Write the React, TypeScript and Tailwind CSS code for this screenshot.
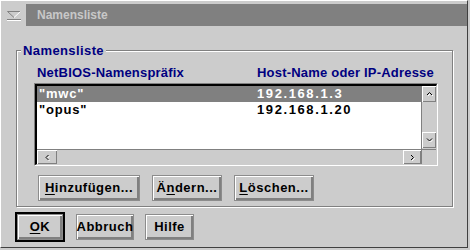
import type { ReactNode } from 'react'

const raised = 'bg-[#cccccc] shadow-[inset_1px_1px_0_#ffffff,inset_-1px_-1px_0_#808080]'

function Arrow({ dir }: { dir: 'up' | 'down' | 'left' | 'right' }) {
  const pts = {
    up: '1,4 3.5,1.5 6,4',
    down: '1,1.5 3.5,4 6,1.5',
    left: '4.5,1 2,3.5 4.5,6',
    right: '2,1 4.5,3.5 2,6',
  }[dir]
  const vertical = dir === 'up' || dir === 'down'
  return (
    <svg width={vertical ? 7 : 6} height={vertical ? 6 : 7} viewBox={vertical ? '0 0 7 6' : '0 0 6 7'}>
      <polyline points={pts} fill="none" stroke="#ffffff" strokeWidth="1" transform="translate(1,1)" />
      <polyline points={pts} fill="none" stroke="#000000" strokeWidth="1" />
    </svg>
  )
}

function Btn({ children, className }: { children: ReactNode; className: string }) {
  return (
    <button
      className={`flex h-[26px] items-center justify-center border border-[#8c8c8c] bg-[#cccccc] text-[13px] font-bold tracking-[0.5px] whitespace-nowrap text-black shadow-[inset_1px_1px_0_#ffffff,inset_-2px_-2px_0_#808080] ${className}`}
    >
      {children}
    </button>
  )
}

function U({ children }: { children: ReactNode }) {
  return <span className="underline decoration-1 underline-offset-2">{children}</span>
}

const rows = [
  { name: '"mwc"', host: '192.168.1.3', selected: true },
  { name: '"opus"', host: '192.168.1.20', selected: false },
]

export default function App() {
  return (
    <div className="h-[250px] w-[470px] bg-[#cccccc] [font-family:'Liberation_Sans',Arial,sans-serif]">
      <div className="flex h-[248px] w-[468px] flex-col border-t border-l border-r border-b border-t-white border-l-white border-r-[#404040] border-b-[#404040]">
        {/* title bar */}
        <div className="mt-[3px] flex h-[22px]">
          <div className="flex w-[25px] items-start justify-center pt-[7px]">
            <svg width="14" height="10" viewBox="0 0 14 10">
              <polyline points="0.5,0.5 13.5,0.5" stroke="#808080" fill="none" />
              <polyline points="0.5,0.5 7,6.5" stroke="#808080" fill="none" />
              <polyline points="13.5,0.5 7,6.5" stroke="#ffffff" fill="none" />
              <line x1="0" y1="8.5" x2="14" y2="8.5" stroke="#808080" />
              <line x1="0" y1="9.5" x2="14" y2="9.5" stroke="#ffffff" />
            </svg>
          </div>
          <div className="flex flex-1 items-center bg-[#808080] pl-[11px] text-[12px] font-bold text-[#c8c8c8]">
            Namensliste
          </div>
        </div>

        {/* group box */}
        <div className="relative mt-[24px] mr-[14px] ml-[15px] border border-[#808080] pt-[14px] pr-[14px] pb-[5px] pl-[17px] shadow-[inset_1px_1px_0_#ffffff,1px_1px_0_#ffffff]">
          <span className="absolute -top-[8px] left-[4px] bg-[#cccccc] px-[2px] text-[13px] leading-[15px] font-bold tracking-[0.4px] text-[#000080]">
            Namensliste
          </span>

          <div className="grid grid-cols-[220px_1fr] pl-[3px] text-[13px] leading-[15px] font-bold tracking-[0.2px] whitespace-nowrap text-[#000080]">
            <span>NetBIOS-Namenspräfix</span>
            <span>Host-Name oder IP-Adresse</span>
          </div>

          {/* list box */}
          <div className="mt-[3px] border border-t-[#808080] border-l-[#808080] border-r-white border-b-white">
            <div className="grid h-[81px] grid-cols-[1fr_15px] grid-rows-[1fr_15px] border-t-2 border-l-2 border-r border-b border-t-black border-l-black border-r-[#cccccc] border-b-[#cccccc]">
              <div className="bg-white">
                {rows.map((r) => (
                  <div
                    key={r.name}
                    className={`grid h-[16px] grid-cols-[220px_1fr] items-center text-[13px] leading-[16px] font-bold ${
                      r.selected ? 'bg-[#808080] text-white' : 'text-black'
                    }`}
                  >
                    <span className="pl-[2px] tracking-[0.8px]">{r.name}</span>
                    <span className="tracking-[1.6px]">{r.host}</span>
                  </div>
                ))}
              </div>
              <div className="flex flex-col justify-between border-l border-[#808080] bg-[#cccccc] pb-[1px]">
                <div className={`flex h-[16px] items-center justify-center ${raised}`}>
                  <Arrow dir="up" />
                </div>
                <div className={`flex h-[16px] items-center justify-center ${raised}`}>
                  <Arrow dir="down" />
                </div>
              </div>
              <div className="flex justify-between border-t border-[#808080] bg-[#cccccc]">
                <div className={`flex w-[20px] items-center justify-center ${raised}`}>
                  <Arrow dir="left" />
                </div>
                <div className={`flex w-[18px] items-center justify-center ${raised}`}>
                  <Arrow dir="right" />
                </div>
              </div>
              <div className="border-t border-l border-[#808080] bg-[#cccccc]" />
            </div>
          </div>

          <div className="mt-[9px] ml-[4px] flex gap-[12px]">
            <Btn className="w-[102px]">
              <U>H</U>inzufügen...
            </Btn>
            <Btn className="w-[70px]">
              Ä<U>n</U>dern...
            </Btn>
            <Btn className="w-[80px]">
              <U>L</U>öschen...
            </Btn>
          </div>
        </div>

        {/* dialog buttons */}
        <div className="mt-[5px] ml-[14px] flex h-[30px] items-center">
          <div className="flex h-[30px] w-[50px] border-2 border-black">
            <Btn className="h-[26px] w-full">
              <U>O</U>K
            </Btn>
          </div>
          <Btn className="ml-[11px] w-[58px]">Abbruch</Btn>
          <Btn className="ml-[11px] w-[49px]">Hilfe</Btn>
        </div>
      </div>
    </div>
  )
}
